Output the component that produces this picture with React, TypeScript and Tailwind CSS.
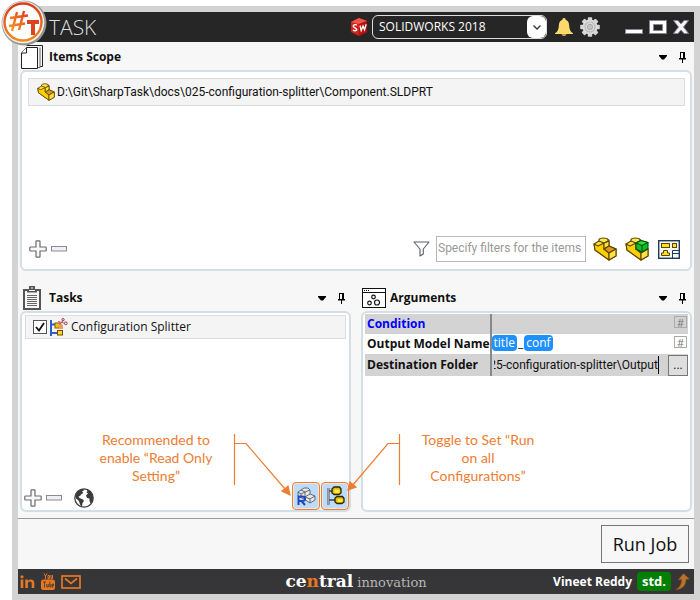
import { useLayoutEffect, useRef } from "react";
import type { ReactNode } from "react";

const Logo = () => (
  <svg viewBox="0 0 46 46" className="absolute left-px top-0 z-10 size-[46px]" aria-label="SharpTask">
    <defs>
      <linearGradient id="hash" x1="0" y1="1" x2="1" y2="0">
        <stop offset="0" stopColor="#f7a021" />
        <stop offset="1" stopColor="#e2361b" />
      </linearGradient>
      <linearGradient id="ring" x1="0" y1="0" x2="0" y2="1">
        <stop offset="0" stopColor="#dd3a1c" />
        <stop offset="1" stopColor="#f08a20" />
      </linearGradient>
      <linearGradient id="rim" x1="0" y1="0" x2="1" y2="1">
        <stop offset="0" stopColor="#b5b3b0" />
        <stop offset="1" stopColor="#8d8b88" />
      </linearGradient>
    </defs>
    <circle cx="23" cy="23" r="22.500" fill="url(#rim)" />
    <circle cx="22.300" cy="22.300" r="21" fill="#f4f2ef" />
    <circle cx="22" cy="22" r="18.500" fill="#fff" stroke="url(#ring)" strokeWidth="2.400" />
    <path d="M16 12 L11 31 M23 11 L18 30 M9 18 L27 15.500 M8 26 L24 23.500" stroke="url(#hash)" strokeWidth="2.400" fill="none" />
    <path d="M26 20 H38 V24 H34 V35 H30 V24 H26 Z" fill="#dc431e" />
  </svg>
);

const SolidWorksIcon = () => (
  <svg viewBox="0 0 18 18" className="size-[18px] shrink-0" aria-hidden="true">
    <path d="M1 4 L9 0 L17 3 L17 14 L9 18 L1 14 Z" fill="#d5201b" />
    <path d="M1 4 L9 0 L17 3 L9 6 Z" fill="#f4554a" />
    <path d="M9 6 L17 3 V14 L9 18 Z" fill="#b01010" />
    <path d="M6.800 7 C4.500 6 3 7 3.300 8.500 C3.800 9.800 6.800 10 6.800 11.600 C6.800 13.200 4.300 13 3 12" fill="none" stroke="#fff" strokeWidth="1.400" />
    <path d="M10 7.500 L11.200 12.500 L13 8 L14.500 11.800 L16.200 6.200" fill="none" stroke="#fff" strokeWidth="1.300" />
  </svg>
);

const Bell = () => (
  <svg viewBox="0 0 18 20" className="h-5 w-[18px]" aria-hidden="true">
    <path d="M9 1 C10.200 1 10.800 1.800 10.600 2.800 C13.400 3.600 14 6 14.200 9 C14.400 12.500 15.200 14.500 18 16.300 V17 H0 V16.300 C2.800 14.500 3.600 12.500 3.800 9 C4 6 4.600 3.600 7.400 2.800 C7.200 1.800 7.800 1 9 1 Z" fill="#fbd96b" />
    <path d="M6.500 17.300 H11.500 C11.300 19.500 6.700 19.500 6.500 17.300Z" fill="#e9b94a" />
  </svg>
);

const Gear = () => (
  <svg viewBox="-10 -10 20 20" className="size-5" aria-hidden="true">
    {[0, 45, 90, 135].map((a) => (
      <rect key={a} x="-2.200" y="-9.800" width="4.400" height="19.600" rx="0.800" fill="#d5d5d5" transform={`rotate(${a})`} />
    ))}
    <circle r="7.500" fill="#dadada" />
    <circle r="5" fill="none" stroke="#b9b9b9" strokeWidth="1.200" />
    <circle r="2.600" fill="#c4c4c4" stroke="#a8a8a8" />
  </svg>
);

const PagesIcon = () => (
  <svg viewBox="0 0 22 24" className="h-6 w-[22px]" fill="#fff" stroke="#222" strokeWidth="1" aria-hidden="true">
    <path d="M5.500 0.500 H21.500 V21.500 H19" fill="none" />
    <path d="M19 2.500 V22.500 H16.500" fill="none" stroke="#666" />
    <path d="M5.500 2.500 H16.500 V23.500 H0.500 V8 Z" />
    <path d="M5.500 2.500 V8 H0.500" />
  </svg>
);

const ClipboardIcon = () => (
  <svg viewBox="0 0 18 24" className="ml-0.5 h-6 w-[18px]" aria-hidden="true">
    <rect x="1" y="4" width="16" height="19" fill="#f7f7f7" stroke="#555" strokeWidth="2" />
    <path d="M4 3 H6 V0 H12 V3 H14 V6.500 H4 Z" fill="#555" />
    <path d="M6 4.500 H12 M8 2 H10" stroke="#f7f7f7" />
    <path d="M4 9.500 H14 M4 11.500 H14 M4 13.500 H14 M4 15.500 H14 M4 17.500 H14 M4 19.500 H14" stroke="#555" strokeWidth="0.900" />
  </svg>
);

const ArgumentsIcon = () => (
  <svg viewBox="0 0 24 20" className="h-5 w-6" fill="none" stroke="#111" aria-hidden="true">
    <rect x="0.500" y="0.500" width="23" height="19" fill="#fff" />
    <path d="M0 4.500 H24" />
    <path d="M2 2.500 H7" strokeDasharray="1 1" />
    <circle cx="11.500" cy="9" r="1.800" strokeWidth="1.200" />
    <circle cx="7.500" cy="15" r="1.800" strokeWidth="1.200" />
    <circle cx="15" cy="14.500" r="2.500" strokeWidth="1.200" />
  </svg>
);

const Caret = () => (
  <svg viewBox="0 0 8 5" className="h-[5px] w-2" aria-hidden="true">
    <path d="M0 0 H8 V1 L5 4.500 H3 L0 1 Z" fill="#000" />
  </svg>
);

const Pin = () => (
  <svg viewBox="0 0 7 11" className="h-[11px] w-[7px]" aria-hidden="true">
    <path d="M1 0 H6 V6 H7 V7.500 H4 V11 H3 V7.500 H0 V6 H1 Z" fill="#000" />
    <path d="M2 1 H4 V6 H2 Z" fill="#f7f7f7" />
  </svg>
);

const PartIcon = ({ green = false, small = false }: { green?: boolean; small?: boolean }) => (
  <svg viewBox="-1 -1 24 24" className={small ? "size-[18px] shrink-0" : "size-6"} stroke="#5d4300" strokeWidth="1.100" strokeLinejoin="round" aria-hidden="true">
    <path d="M0 6 L5 3 L9 1 L15 2 V8 L22 11 V18 L15 22 L1 12 Z" fill="#ffe23c" />
    <path d="M0 6 L4 8 L10 5 V11 L15 15 V22 L1 12 Z" fill="#fbd000" />
    <path d="M10 5 L15 3 V8 L10 11 Z" fill="#ffe23c" />
    <path d="M10 11 L15 8 L22 11 L15 15 Z" fill="#dc9a14" />
    <path d="M15 15 L22 11 V18 L15 22 Z" fill="#ffe23c" />
    <path d="M5 3 V1.500 C6 -0.500 13 -0.500 14 1.500 V3 L10 5 Z" fill="#ffe45a" />
    {green && (
      <g stroke="#06520f">
        <path d="M10 5 L15 2.500 L22 4.500 V10.500 L16 14 L10 11 Z" fill="#0cc02b" />
        <path d="M10 5 L16 7.500 L22 4.500 L15 2.500 Z" fill="#35dc40" />
        <path d="M16 7.500 V14" />
      </g>
    )}
  </svg>
);

const DrawingIcon = () => (
  <svg viewBox="0 0 22 19" className="h-[19px] w-[22px]" aria-hidden="true">
    <rect x="0.700" y="0.700" width="20.600" height="17.600" fill="#f3f6f9" stroke="#1f3a55" strokeWidth="1.400" />
    <g fill="#ffe01b" stroke="#5d4300">
      <rect x="3.500" y="3.500" width="8" height="4" />
      <rect x="14.500" y="3.500" width="4" height="4" />
      <path d="M5.500 10.500 H9.500 V13 H11.500 V15.500 H3.500 V13 H5.500 Z" />
    </g>
    <path d="M14.500 18 V10.500 H21 M15 13.500 H21" fill="none" stroke="#1f3a55" />
  </svg>
);

const Plus = () => (
  <svg viewBox="0 0 18 18" className="size-[18px]" aria-hidden="true">
    <path d="M7 1.500 Q7 0.800 7.700 0.800 H10.300 Q11 0.800 11 1.500 V7 H16.500 Q17.200 7 17.200 7.700 V10.300 Q17.200 11 16.500 11 H11 V16.500 Q11 17.200 10.300 17.200 H7.700 Q7 17.200 7 16.500 V11 H1.500 Q0.800 11 0.800 10.300 V7.700 Q0.800 7 1.500 7 H7 Z" fill="#f8f8f8" stroke="#6b6b6b" strokeWidth="1.200" />
  </svg>
);

const Minus = () => (
  <svg viewBox="0 0 16 6" className="h-[6px] w-4" aria-hidden="true">
    <rect x="0.500" y="0.500" width="15" height="4.500" fill="#efeff4" stroke="#8a8a96" />
  </svg>
);

const Funnel = () => (
  <svg viewBox="0 0 17 16" className="h-4 w-[17px] shrink-0" aria-hidden="true">
    <path d="M1 1 H16 L10.300 8 V13 L7 15 V8 Z" fill="#fff" stroke="#5b6066" strokeWidth="1.100" strokeLinejoin="round" />
  </svg>
);

const SplitterIcon = () => (
  <svg viewBox="0 0 18 18" className="size-[18px] shrink-0" aria-hidden="true">
    <path d="M1 2 V18 M1 6.500 H6 M1 15 H8" stroke="#2d5fc4" strokeWidth="2" fill="none" />
    <rect x="5" y="5" width="5" height="5" fill="#f5c211" stroke="#8c5a00" />
    <rect x="7.500" y="12.500" width="5" height="4.500" fill="#ffd91a" stroke="#6d4a00" />
    <path d="M8 7 Q11 5 13 7 V11 H9" fill="#ec9b64" />
    <path d="M8 3.500 L14 5 M10 6.500 L13 2.500" stroke="#b35a68" />
    <circle cx="15.800" cy="5.300" r="1.400" fill="none" stroke="#a0344c" />
    <circle cx="13" cy="1.700" r="1.200" fill="none" stroke="#a0344c" />
  </svg>
);

const Globe = () => (
  <svg viewBox="0 0 20 20" className="size-5" aria-hidden="true">
    <circle cx="10" cy="10" r="9.200" fill="#fff" stroke="#3a3a3a" strokeWidth="1.200" />
    <path d="M4 3 L9 1 L10.500 2 L8 3.500 L9.500 5 L7.500 6 L6 8 L4.500 8.500 L5.500 10 L9 11.500 L10 13 L8.500 15 L8 18.500 C5.500 17.500 6 14.500 4.500 12.500 L2 10.500 L1 8 Z" fill="#3a3a3a" />
    <path d="M12 1 L16.500 3.500 C18.500 6 19.500 9 18.800 12.500 L16.500 15.500 L15.500 13 L15.500 10.500 L13 10 L12 7.500 L14 5.500 L12.500 4.500 L13.500 3 Z" fill="#3a3a3a" />
  </svg>
);

const ReadOnlyIcon = () => (
  <svg viewBox="0 0 20 20" className="size-5" aria-hidden="true">
    <g fill="#e6e7e9" stroke="#555b63" strokeWidth="0.900" strokeLinejoin="round">
      <path d="M2 6 L5 4 L8 2 L12 2 L14 4 V8 L19 10 V14 L14 17 L8 13 L2 10 Z" />
      <path d="M2 6 L5 8 L9 6 V11 L14 13 L19 10 M14 13 V17 M5 4 L9 6 L14 4 M5 8 V12 M9 11 L14 8" fill="none" />
    </g>
    <path d="M2.500 19 V10.500 H6 Q9 10.500 9 12.800 Q9 15 6 15 H2.500 M5.500 15 L9 19" fill="none" stroke="#1e46b8" strokeWidth="2" />
  </svg>
);

const ConfigurationsIcon = () => (
  <svg viewBox="0 0 20 20" className="size-5" aria-hidden="true">
    <path d="M3.500 2 V19 M3.500 5 H9 M3.500 14 H11" stroke="#60666e" strokeWidth="2.200" fill="none" />
    <path d="M3.500 2 V19" stroke="#aab0b8" strokeWidth="0.800" />
    <g stroke="#2c2500" strokeWidth="1.300" fill="#e0b90a" strokeLinejoin="round">
      <path d="M7 3 L9 1 H14.500 L16 3 V7 L14 8.500 H9 L7 7 Z" />
      <path d="M10 12 L12 10.500 H17.500 L19 12.500 V16 L17 17.500 H12 L10 16 Z" />
    </g>
    <path d="M9.500 3.500 H14.500 V7 H9.500 Z M12.500 13 H17.500 V16 H12.500 Z" fill="#ffe840" />
  </svg>
);

function Panel({ id, icon, title, children }: { id: string; icon: ReactNode; title: string; children: ReactNode }) {
  return (
    <section aria-labelledby={id} className="flex min-w-0 flex-1 flex-col">
      <header className="flex h-7 items-center pl-px pr-1 pt-0.5">
        <span className="flex w-7 shrink-0 items-center">{icon}</span>
        <h2 id={id} className="flex-1 text-xs font-bold">{title}</h2>
        <button className="mr-3" aria-label={`${title} menu`}><Caret /></button>
        <button className="mr-0.5" aria-label={`Pin ${title}`}><Pin /></button>
      </header>
      <div className="flex flex-1 flex-col rounded-md border-2 border-[#d3dee5] bg-white">{children}</div>
    </section>
  );
}

const HashButton = ({ label }: { label: string }) => (
  <button aria-label={label} className="float-right mr-px mt-0.5 flex h-3 w-[13px] items-center justify-center border border-[#aaa] text-[11px] leading-none text-[#777]">#</button>
);

const Chip = ({ children }: { children: ReactNode }) => (
  <span className="rounded bg-[#1e90ff] px-0.5 text-xs leading-4 text-white">{children}</span>
);

function FolderInput() {
  const ref = useRef<HTMLInputElement>(null);
  useLayoutEffect(() => {
    const el = ref.current;
    if (el) el.scrollLeft = el.scrollWidth;
  }, []);
  return (
    <input
      ref={ref}
      id="folder"
      defaultValue="D:\Git\SharpTask\docs\025-configuration-splitter\Output"
      className="ml-0.5 h-[18px] min-w-0 flex-1 border-r border-black bg-transparent text-xs outline-none"
    />
  );
}

export default function App() {
  return (
    <div className="relative flex min-h-screen flex-col bg-white pl-3 pt-1.5 font-['Open_Sans','Noto_Sans',sans-serif] text-xs text-[#111]">
      <Logo />
      <main className="flex flex-1 flex-col border-[6px] border-[#d3d3d3] bg-[#f7f7f7]">
        <header className="flex h-[30px] items-center bg-[#262626] pl-[31px] pr-[5px] text-white">
          <h1 className="flex-1 text-[21px] font-light leading-7 text-[#ddd]">TASK</h1>
          <SolidWorksIcon />
          <div className="relative ml-1 h-6 w-[175px] rounded-md border border-[#ddd]">
            <select aria-label="SOLIDWORKS version" className="h-full w-full appearance-none bg-transparent pl-1.5 text-xs outline-none">
              <option>SOLIDWORKS 2018</option>
            </select>
            <span className="pointer-events-none absolute inset-y-0 right-0 flex w-[19px] items-center justify-center rounded-md bg-white">
              <svg viewBox="0 0 8 5" className="h-[5px] w-2"><path d="M0.500 0.500 L4 4 L7.500 0.500" fill="none" stroke="#333" strokeWidth="1.300" /></svg>
            </span>
          </div>
          <button className="ml-2" aria-label="Notifications"><Bell /></button>
          <button className="ml-[7px]" aria-label="Settings"><Gear /></button>
          <button className="ml-[25px]" aria-label="Minimize">
            <svg viewBox="0 0 18 14" className="h-3.5 w-[18px]"><rect x="0.500" y="9.500" width="17" height="4" fill="#fff" stroke="#85859a" /></svg>
          </button>
          <button className="ml-1.5" aria-label="Maximize">
            <svg viewBox="0 0 18 14" className="h-3.5 w-[18px]"><path fillRule="evenodd" d="M0.500 0.500 H17.500 V13.500 H0.500 Z M4.500 4.500 V10.500 H13.500 V4.500 Z" fill="#fff" stroke="#85859a" /></svg>
          </button>
          <button className="ml-1.5" aria-label="Close">
            <svg viewBox="0 0 16 14" className="h-3.5 w-4"><path d="M0.500 0.500 H5 L8 4 L11 0.500 H15.500 L10.500 7 L15.500 13.500 H11 L8 10 L5 13.500 H0.500 L5.500 7 Z" fill="#f4f4f4" stroke="#85859a" /></svg>
          </button>
        </header>

        <div className="grid flex-1 auto-rows-fr grid-cols-1 gap-3 px-0.5 pb-1.5">
          <div className="flex">
            <Panel id="scope" icon={<PagesIcon />} title="Items Scope">
              <ul className="m-1.5 mr-[5px]">
                <li className="flex h-7 items-center gap-0.5 border border-[#dcdcdc] bg-[#f4f4f4] pl-2 font-['Roboto',sans-serif]">
                  <PartIcon small />
                  D:\Git\SharpTask\docs\025-configuration-splitter\Component.SLDPRT
                </li>
              </ul>
              <div className="mt-auto flex items-center pb-[7px] pl-[7px] pr-1.5">
                <button aria-label="Add item"><Plus /></button>
                <button className="ml-1" aria-label="Remove item"><Minus /></button>
                <div className="ml-auto flex items-center">
                  <Funnel />
                  <input aria-label="Item filters" placeholder="Specify filters for the items" className="ml-1.5 h-[26px] w-[150px] border border-[#b5b8bd] bg-white pb-0.5 pl-px font-['Roboto',sans-serif] text-xs placeholder:text-[#999]" />
                  <button className="ml-[7px]" aria-label="Parts"><PartIcon /></button>
                  <button className="ml-2" aria-label="Assemblies"><PartIcon green /></button>
                  <button className="ml-[9px] mr-1" aria-label="Drawings"><DrawingIcon /></button>
                </div>
              </div>
            </Panel>
          </div>

          <div className="relative flex gap-2.5">
            <Panel id="tasks" icon={<ClipboardIcon />} title="Tasks">
              <div className="m-[3px] mt-0.5 flex h-6 items-center gap-[3px] border border-[#dcdcdc] bg-[#f4f4f4] pl-[7px]">
                <span className="relative flex size-3.5 shrink-0">
                  <input id="splitter" type="checkbox" defaultChecked className="peer size-3.5 appearance-none border border-[#555] bg-white" />
                  <svg viewBox="0 0 14 14" className="pointer-events-none absolute inset-0 hidden size-3.5 peer-checked:block"><path d="M3 7 L6 10.500 L11 3" fill="none" stroke="#111" strokeWidth="1.800" /></svg>
                </span>
                <label htmlFor="splitter" className="flex items-center gap-[3px]"><SplitterIcon />Configuration Splitter</label>
              </div>
              <div className="mt-auto flex items-end pl-0.5">
                <div className="flex h-6 flex-1 items-center">
                  <button aria-label="Add task"><Plus /></button>
                  <button className="ml-1" aria-label="Remove task"><Minus /></button>
                  <button className="ml-3" aria-label="Web tasks"><Globe /></button>
                </div>
                <button aria-label="Read Only Setting" className="mr-px flex h-7 w-7 items-center justify-center rounded border border-[#ed7d31] bg-[#bcdcfa] ring-1 ring-inset ring-[#f6e4d8]"><ReadOnlyIcon /></button>
                <button aria-label="Run on all Configurations" className="flex h-7 w-7 items-center justify-center rounded border border-[#ed7d31] bg-[#bcdcfa] ring-1 ring-inset ring-[#f6e4d8]"><ConfigurationsIcon /></button>
              </div>
            </Panel>
            <Panel id="arguments" icon={<ArgumentsIcon />} title="Arguments">
              <table className="mx-0.5 mt-px table-fixed border-collapse text-left">
                <colgroup><col className="w-[122px]" /><col /></colgroup>
                <tbody>
                  <tr className="h-5 bg-[#d3d3d3]">
                    <th className="whitespace-nowrap border-r-2 border-[#888] pl-0.5 text-[#0000ff]">Condition</th>
                    <td className="align-top"><HashButton label="Condition placeholder" /></td>
                  </tr>
                  <tr className="h-5">
                    <th className="whitespace-nowrap border-r-2 border-[#888] pl-0.5">Output Model Name</th>
                    <td className="align-top">
                      <HashButton label="Output name placeholder" />
                      <div className="flex pt-px"><Chip>title</Chip><span className="px-px leading-4">_</span><Chip>conf</Chip></div>
                    </td>
                  </tr>
                  <tr className="h-[22px] bg-[#d3d3d3]">
                    <th className="whitespace-nowrap border-r-2 border-[#888] pl-0.5"><label htmlFor="folder">Destination Folder</label></th>
                    <td>
                      <div className="flex items-center font-['Roboto',sans-serif]">
                        <FolderInput />
                        <button aria-label="Browse" className="ml-[9px] h-[21px] w-5 border border-[#777] bg-[#dedede] leading-4">...</button>
                      </div>
                    </td>
                  </tr>
                </tbody>
              </table>
            </Panel>

            <div className="pointer-events-none absolute inset-x-0 bottom-0 flex pl-[72px] font-['Lato',sans-serif] text-sm leading-[18px] text-[#ed7d31]">
              <p className="mb-[27px] w-32 self-end text-center">Recommended to enable “Read Only Setting”</p>
              <svg viewBox="0 0 170 86" className="mx-3 h-[86px] w-[170px] shrink-0" fill="none" stroke="#ed7d31" strokeWidth="1.200" aria-hidden="true">
                <path d="M2.500 8 V59 M2.500 17.500 H14 L53 63" />
                <path d="M167.500 8 V59 M167.500 17.500 H156 L120 60" />
                <path d="M58 69 L50 65 L56 60 Z M116 64 L118 56 L124 61 Z" fill="#ed7d31" />
              </svg>
              <p className="mb-[27px] w-32 self-end text-center">Toggle to Set “Run on all Configurations”</p>
            </div>
          </div>
        </div>

        <div className="flex h-[51px] items-center justify-end border-t border-[#999] pr-[5px]">
          <button className="h-[38px] w-[88px] border border-[#777] text-lg">Run Job</button>
        </div>

        <footer className="grid h-[25px] grid-cols-[1fr_auto_1fr] items-center bg-[#363638] px-0.5 text-white">
          <nav className="flex items-center gap-1.5 text-[#e87722]">
            <a href="#linkedin" aria-label="LinkedIn">
              <svg viewBox="0 0 15 14" className="h-3.5 w-[15px]" fill="currentColor"><circle cx="2" cy="1.800" r="1.600" /><path d="M0.700 4.500 H3.300 V13 H0.700 Z M5.300 4.500 H7.900 V6 C9 3.800 14.300 3.500 14.300 8 V13 H11.700 V8.500 C11.700 5.500 7.900 6 7.900 8.500 V13 H5.300 Z" /></svg>
            </a>
            <a href="#youtube" aria-label="YouTube">
              <svg viewBox="0 0 14 17" className="h-[17px] w-3.5" fill="none" stroke="currentColor"><path d="M3 0.500 L4.500 3 L6 0.500 M4.500 3 V6 M7 2.500 H8.500 V5.500 H7 Z M10 2 V5.500 H11.500 V2" /><rect x="0.500" y="7" width="13" height="9.500" rx="1.500" fill="currentColor" /><path d="M2 9 H5 M3.500 9 V14.500 M5.800 11 V14 H7.300 V11 M8.800 8.500 V14 H10 V11 M12.500 14 H11.300 V11 H12.500 V12.500 H11.500" stroke="#363638" strokeWidth="0.800" /></svg>
            </a>
            <a href="#mail" aria-label="Email">
              <svg viewBox="0 0 20 14" className="h-3.5 w-5" fill="none" stroke="currentColor" strokeWidth="1.700"><rect x="1" y="1" width="18" height="12" /><path d="M4 3.500 L10 8.500 L16 3.500" /></svg>
            </a>
          </nav>
          <p className="flex items-baseline gap-1 font-['DejaVu_Serif',serif] leading-5">
            <span className="text-[17px] font-bold">ce<span className="text-[#e87722]">n</span>tral</span>
            <span className="text-[13px] text-[#b5b5b5]">innovation</span>
          </p>
          <div className="flex items-center justify-end pr-0.5">
            <span className="whitespace-nowrap text-xs font-bold">Vineet Reddy</span>
            <span className="ml-[5px] flex h-[19px] w-[34px] items-center justify-center rounded bg-[#008000] text-[13px] font-bold">std.</span>
            <svg viewBox="0 0 15 18" className="ml-1 h-[18px] w-[15px]" aria-hidden="true"><path d="M8.500 0.500 L14.500 6 L11 6.500 C11 12 8 16.500 0.500 16.800 C4.500 14.500 6.500 11.500 6.500 6.500 L3 7 Z" fill="#b9722c" stroke="#7d4a1b" strokeWidth="0.700" /></svg>
          </div>
        </footer>
      </main>
    </div>
  );
}
